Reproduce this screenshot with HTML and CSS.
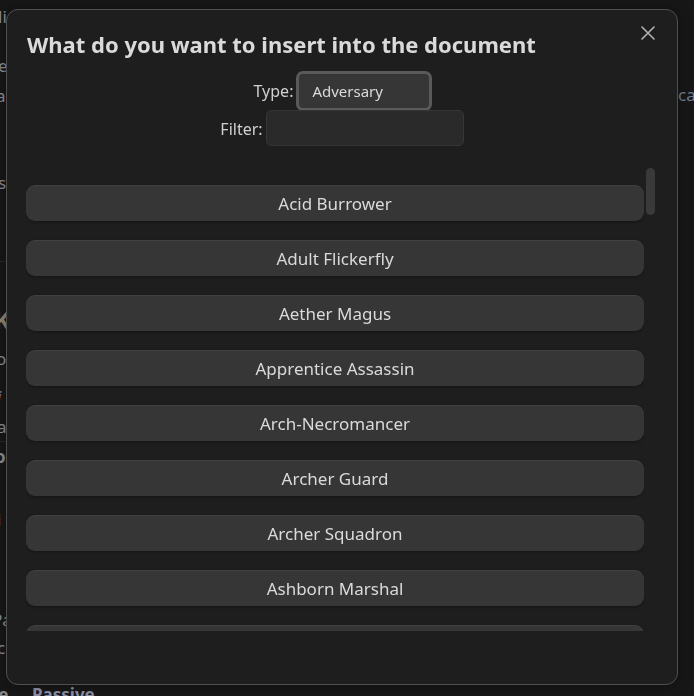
FILE: index.html
```html
<!DOCTYPE html>
<html>
<head>
<meta charset="utf-8">
<link rel="stylesheet" href="styles.css">
</head>
<body>
<div class="page">
  <span class="frag f1">li</span>
  <span class="frag f2">e</span>
  <span class="frag f3">a</span>
  <span class="frag f4">s</span>
  <span class="frag f5">K</span>
  <span class="frag f6">o</span>
  <span class="frag f7">i</span>
  <span class="frag f8">a</span>
  <span class="frag f9">o</span>
  <span class="frag f10">i</span>
  <span class="frag f11">Pa</span>
  <span class="frag f12">c</span>
  <span class="frag f13">ca</span>
  <span class="frag f14">re</span>
  <span class="frag f15">Passive</span>
  <div class="rule r1"></div>
  <div class="rule r2"></div>
</div>
<div class="modal">
  <button class="close" aria-label="Close">
    <svg width="16" height="16" viewBox="0 0 16 16"><path d="M2 2 L14 14 M14 2 L2 14" stroke="#b3b3b3" stroke-width="1.6" stroke-linecap="round"/></svg>
  </button>
  <h1 class="title">What do you want to insert into the document</h1>
  <div class="field type-field">
    <label>Type:</label>
    <div class="select">Adversary</div>
  </div>
  <div class="field">
    <label>Filter:</label>
    <div class="input"></div>
  </div>
  <div class="list-wrap">
    <div class="list">
      <button class="item">Acid Burrower</button>
      <button class="item">Adult Flickerfly</button>
      <button class="item">Aether Magus</button>
      <button class="item">Apprentice Assassin</button>
      <button class="item">Arch-Necromancer</button>
      <button class="item">Archer Guard</button>
      <button class="item">Archer Squadron</button>
      <button class="item">Ashborn Marshal</button>
      <button class="item">Battle Box</button>
      <button class="item">Bear</button>
      <button class="item">Bladed Guard</button>
      <button class="item">Brawny Zombie</button>
    </div>
    <div class="scrollbar"><div class="thumb"></div></div>
  </div>
</div>
</body>
</html>
```
FILE: styles.css
```css
* { box-sizing: border-box; }
html, body { margin: 0; padding: 0; }
body {
  width: 694px;
  height: 696px;
  overflow: hidden;
  background: #171717;
  font-family: "Noto Sans", "Open Sans", sans-serif;
  color: #dadada;
}
.page {
  position: relative;
  width: 694px;
  height: 696px;
}
.frag {
  position: absolute;
  font-size: 17px;
  color: #8a8f98;
  line-height: 1;
}
.f1 { left: -2px; top: 8px; }
.f2 { left: -2px; top: 57px; }
.f3 { left: -4px; top: 87px; }
.f4 { left: -2px; top: 174px; }
.f5 { left: -6px; top: 308px; font-size: 24px; font-weight: bold; color: #8f8878; }
.f6 { left: -4px; top: 350px; }
.f7 { left: -3px; top: 388px; font-style: italic; color: #8a82a8; }
.f8 { left: -3px; top: 418px; }
.f9 { left: -5px; top: 448px; font-weight: bold; }
.f10 { left: -3px; top: 511px; color: #9a80a0; }
.f11 { left: -8px; top: 611px; }
.f12 { left: -3px; top: 639px; }
.f13 { left: 678px; top: 86px; color: #6f7d90; }
.f14 { left: -9px; top: 686px; font-size: 17px; font-weight: bold; color: #8a8a8a; }
.f15 { left: 32px; top: 686px; font-size: 17px; font-weight: bold; color: #8a8fa8; }
.rule { position: absolute; left: 0; width: 8px; height: 1px; background: #2a2a2a; }
.r1 { top: 261px; }
.r2 { top: 441px; }

.modal {
  position: fixed;
  left: 6px;
  top: 9px;
  width: 672px;
  height: 676px;
  background: #1e1e1e;
  border: 1px solid #505050;
  border-radius: 12px;
  padding: 17px 20px 0 20px;
  box-shadow: 0 0 14px rgba(0,0,0,0.35);
  display: flex;
  flex-direction: column;
}
.close {
  position: absolute;
  right: 16px;
  top: 10px;
  width: 26px;
  height: 26px;
  padding: 0;
  border: 0;
  background: transparent;
  display: flex;
  align-items: center;
  justify-content: center;
}
.title {
  margin: 0 0 10px 0;
  font-size: 22px;
  font-weight: 700;
  line-height: 34px;
  color: #dadada;
}
.field {
  display: flex;
  justify-content: center;
  align-items: center;
  gap: 3px;
  font-size: 16px;
  color: #d0d0d0;
}
.field label { line-height: 20px; }
.type-field { margin-left: -88px; }
.select {
  width: 136px;
  height: 40px;
  background: #363636;
  border: 3px solid #5a5a5a;
  border-radius: 7px;
  padding: 0 13px;
  font-size: 15px;
  line-height: 34px;
  color: #dadada;
  margin-right: -90px;
}
.input {
  width: 198px;
  height: 36px;
  background: #2a2a2a;
  border: 1px solid #363636;
  border-radius: 5px;
  margin-top: -1px;
}
.list-wrap {
  margin-top: 22px;
  margin-left: -1px;
  height: 463px;
  display: flex;
  gap: 2px;
}
.list {
  flex: 1;
  overflow: hidden;
  padding-top: 17px;
  display: flex;
  flex-direction: column;
  gap: 19px;
}
.scrollbar {
  width: 10px;
  flex: 0 0 10px;
  margin-right: 1px;
}
.thumb {
  width: 9px;
  height: 47px;
  background: #3a3a3a;
  border-radius: 5px;
}
.item {
  flex: 0 0 36px;
  height: 36px;
  background: #363636;
  border: 0;
  border-radius: 9px;
  box-shadow: 0 1px 3px rgba(0,0,0,0.35), inset 0 1px 0 rgba(255,255,255,0.06);
  color: #dadada;
  font-family: "Noto Sans", "Open Sans", sans-serif;
  font-size: 17px;
  text-align: center;
  padding: 0;
}
```
